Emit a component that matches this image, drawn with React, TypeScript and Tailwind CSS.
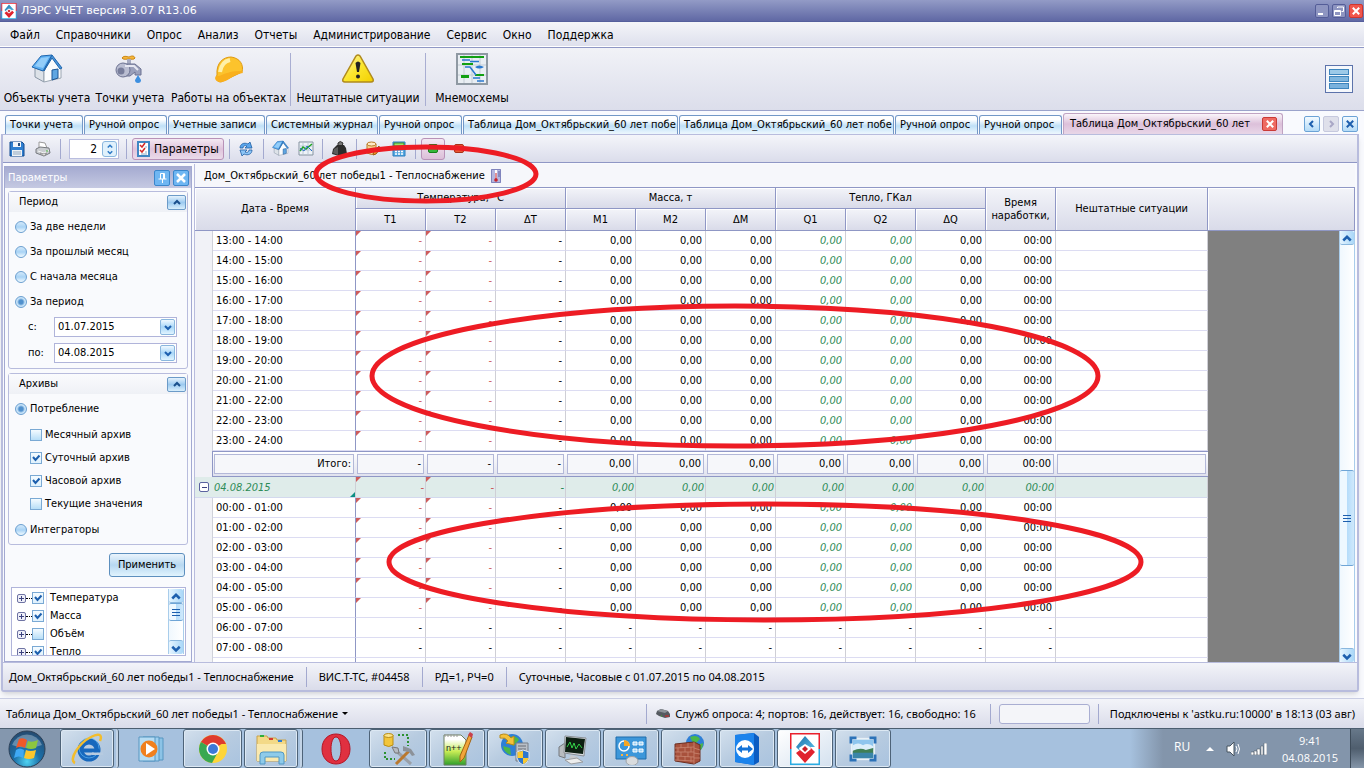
import { useState } from 'react';
import type { ReactNode } from 'react';

const MENU = ['Файл', 'Справочники', 'Опрос', 'Анализ', 'Отчеты', 'Администрирование', 'Сервис', 'Окно', 'Поддержка'];

const TABS = [
  { title: 'Точки учета', width: 'w-[78px]' },
  { title: 'Ручной опрос', width: 'w-[83px]' },
  { title: 'Учетные записи', width: 'w-[97px]' },
  { title: 'Системный журнал', width: 'w-[112px]' },
  { title: 'Ручной опрос', width: 'w-[83px]' },
  { title: 'Таблица Дом_Октябрьский_60 лет побе', width: 'w-[215px]' },
  { title: 'Таблица Дом_Октябрьский_60 лет побе', width: 'w-[215px]' },
  { title: 'Ручной опрос', width: 'w-[83px]' },
  { title: 'Ручной опрос', width: 'w-[83px]' },
];

interface ArchiveRow {
  time: string;
  empty?: boolean;
}

const ROWS_BEFORE: ArchiveRow[] = [
  { time: '13:00 - 14:00' },
  { time: '14:00 - 15:00' },
  { time: '15:00 - 16:00' },
  { time: '16:00 - 17:00' },
  { time: '17:00 - 18:00' },
  { time: '18:00 - 19:00' },
  { time: '19:00 - 20:00' },
  { time: '20:00 - 21:00' },
  { time: '21:00 - 22:00' },
  { time: '22:00 - 23:00' },
  { time: '23:00 - 24:00' },
];

const ROWS_AFTER: ArchiveRow[] = [
  { time: '00:00 - 01:00' },
  { time: '01:00 - 02:00' },
  { time: '02:00 - 03:00' },
  { time: '03:00 - 04:00' },
  { time: '04:00 - 05:00' },
  { time: '05:00 - 06:00' },
  { time: '06:00 - 07:00', empty: true },
  { time: '07:00 - 08:00', empty: true },
];

const VALUES = ['-', '-', '-', '0,00', '0,00', '0,00', '0,00', '0,00', '0,00', '00:00'];

/* ---------- Иконки ---------- */

function LogoIcon({ size }: { size: number }) {
  return (
    <svg width={size} height={size} viewBox="0 0 30 32" className="shrink-0">
      <defs>
        <linearGradient id="logoBlue" x1="0" y1="0" x2="1" y2="1">
          <stop offset="0" stopColor="#1c6fa8" />
          <stop offset="1" stopColor="#5bc0ea" />
        </linearGradient>
      </defs>
      <path d="M0 0H30V16H0Z" fill="#e9202d" />
      <path d="M0 16H30V32H0Z" fill="#29abe2" />
      <path d="M1.500 1.500H28.500V30.500H1.500Z" fill="#fff" />
      <path d="M15 3L25 14H20L15 11L9 15L10 18L6 14Z" fill="url(#logoBlue)" />
      <path d="M15 30L6 20L10 17L15 21L21 16L20 14L25 19Z" fill="#e0232e" />
      <path d="M15 13L18 16L15 19L12 16Z" fill="#c81e28" />
    </svg>
  );
}

function HouseIcon({ size }: { size: number }) {
  return (
    <svg width={size} height={size} viewBox="0 0 32 32">
      <path d="M4 15L13 18V29L4 24Z" fill="#dde2e8" stroke="#8a97a6" />
      <path d="M13 17L21 4L30 15V25L13 29Z" fill="#fbfcfd" stroke="#9aa5b1" />
      <path d="M10 3L21 2L12 18L1 14Z" fill="#5fb0f2" stroke="#1f66ae" strokeLinejoin="round" />
      <path d="M10 5L18 4L12 15L4 13Z" fill="#93cdf9" />
      <path d="M21 2L31 15L29 16L21 5L13 18Z" fill="#4b97dc" stroke="#1f66ae" strokeLinejoin="round" />
      <path d="M21 17L27 16V25L21 27Z" fill="#5fa6e2" stroke="#1c5796" />
    </svg>
  );
}

function FaucetIcon() {
  return (
    <svg width="32" height="32" viewBox="0 0 32 32">
      <path d="M8 5C10 2 14 4 15 4C17 3 20 2 21 5C20 7 17 6 15 6C13 6 9 7 8 5Z" fill="#f6b73c" stroke="#c98412" />
      <path d="M13 6H17V12H13Z" fill="#a6abc2" />
      <path d="M9 11H21L27 16V22H21V19L16 23H10Z" fill="#9aa0bb" stroke="#6d7392" />
      <circle cx="9" cy="17" r="7" fill="#b9bdd1" stroke="#6d7392" />
      <circle cx="7" cy="18" r="3.500" fill="#777d9b" />
      <path d="M11 13L20 13L24 17" stroke="#e6e8f2" strokeWidth="2" fill="none" />
      <path d="M24 22L27 27A3 3 0 1 1 21 27Z" fill="#3d8fe0" />
    </svg>
  );
}

function HelmetIcon() {
  return (
    <svg width="32" height="32" viewBox="0 0 32 32">
      <path d="M4 22C3 10 10 4 18 4C27 5 31 12 29 19L8 29C4 29 2 26 4 22Z" fill="#fcc32c" stroke="#e09a10" />
      <path d="M7 19C8 12 12 8 17 7" stroke="#fff0a8" strokeWidth="4" fill="none" />
      <path d="M3 23C8 24 14 17 29 18L30 20C21 20 15 30 6 29C3 28 1 26 3 23Z" fill="#f9b01d" />
    </svg>
  );
}

function WarningIcon() {
  return (
    <svg width="32" height="32" viewBox="0 0 32 32">
      <defs>
        <linearGradient id="warn" x1="0" y1="0" x2="1" y2="1">
          <stop offset="0" stopColor="#fdf6b0" />
          <stop offset="0.500" stopColor="#fbe62e" />
          <stop offset="1" stopColor="#f2cf00" />
        </linearGradient>
      </defs>
      <path d="M14 3Q16 1 18 3L31 26Q32 29 29 29H3Q0 29 1 26Z" fill="url(#warn)" stroke="#b08a1c" strokeWidth="1.500" />
      <path d="M13.500 10Q16 7 18.500 10L17 19H15Z" fill="#222" />
      <circle cx="16" cy="23.500" r="2" fill="#222" />
    </svg>
  );
}

function SchemeIcon() {
  return (
    <svg width="32" height="32" viewBox="0 0 32 32">
      <path d="M1 1H31V31H1Z" fill="#e9eef3" stroke="#8f99a3" strokeWidth="2" />
      <path d="M8 2V30M16 2V30M24 2V30M2 12H30M2 22H30" stroke="#c3ccd5" />
      <path d="M4 4H28" stroke="#12a012" strokeWidth="2" />
      <path d="M6 11H17" stroke="#12a012" strokeWidth="2" />
      <path d="M5 22H13V25H5Z" fill="#12a012" />
      <path d="M19 22H28" stroke="#12a012" strokeWidth="2" />
      <path d="M6 7H14M14 8.500H23M9 14H14L20 22M17 25H24M21 28H28" stroke="#2a78cf" strokeWidth="1.500" fill="none" />
      <path d="M19 14Q23 11 28 14Q23 17 19 14Z" fill="#2a78cf" />
    </svg>
  );
}

function SaveIcon() {
  return (
    <svg width="16" height="16" viewBox="0 0 16 16">
      <path d="M1 1H13L15 3V15H1Z" fill="#2f7fd0" stroke="#134a8e" />
      <path d="M4 1H12V6H4Z" fill="#f2f6fa" />
      <path d="M9 2H11V5H9Z" fill="#274f80" />
      <path d="M3 9H13V15H3Z" fill="#eef2f6" />
      <path d="M4 11H12M4 13H12" stroke="#91a7bf" />
    </svg>
  );
}

function PrinterIcon() {
  return (
    <svg width="16" height="16" viewBox="0 0 16 16">
      <path d="M4 1L10 2L12 7L4 8Z" fill="#fff" stroke="#9a9a9a" />
      <path d="M1 8L5 6L14 7L15 12L9 15L1 12Z" fill="#c9ccd0" stroke="#76797e" />
      <path d="M3 10L9 12L14 9" stroke="#f3f3f3" fill="none" />
      <path d="M5 12L9 13L12 12L9 15Z" fill="#fff" stroke="#999" />
      <path d="M11 10H13" stroke="#3faa36" />
    </svg>
  );
}

function ChecklistIcon() {
  return (
    <svg width="13" height="16" viewBox="0 0 13 16" className="shrink-0">
      <path d="M1 1H12V15H1Z" fill="#fff" stroke="#3f87c4" strokeWidth="2" />
      <path d="M3 4L5 6L8 2M3 9L5 11L8 7" stroke="#d42a2a" strokeWidth="1.500" fill="none" />
      <path d="M8 6H10M8 11H10M4 13H10" stroke="#8fa9c4" />
    </svg>
  );
}

function RefreshIcon() {
  return (
    <svg width="16" height="16" viewBox="0 0 16 16">
      <path d="M2 7C2 3 6 1 10 3L12 1L14 7H7L9 5C7 4 5 5 5 7Z" fill="#5aa6ec" stroke="#215fa5" strokeWidth="0.800" />
      <path d="M14 9C14 13 10 15 6 13L4 15L2 9H9L7 11C9 12 11 11 11 9Z" fill="#8cc5f6" stroke="#215fa5" strokeWidth="0.800" />
    </svg>
  );
}

function ChartIcon() {
  return (
    <svg width="16" height="16" viewBox="0 0 16 16">
      <path d="M1 1H15V14H1Z" fill="#eef3f8" stroke="#8593a0" />
      <path d="M5 2V13M10 2V13M2 5H14M2 9H14" stroke="#bccad8" />
      <path d="M2 10L5 6L8 8L14 3" stroke="#22a522" strokeWidth="1.500" fill="none" />
      <path d="M2 7L6 10L9 5L14 10" stroke="#2b6fc9" fill="none" />
    </svg>
  );
}

function WeightIcon() {
  return (
    <svg width="18" height="18" viewBox="0 0 18 18">
      <path d="M8 3Q10 0 13 3L12 6L8 6Z" fill="#777" stroke="#333" />
      <path d="M3 9L7 5L14 5L16 8L17 14L9 16L2 14Z" fill="#2c2c2c" />
      <path d="M4 9L8 7L8 15L3 13Z" fill="#5b5b5b" />
    </svg>
  );
}

function DatabaseIcon() {
  return (
    <svg width="16" height="16" viewBox="0 0 16 16">
      <path d="M2 3V12Q7 15 11 12V3Z" fill="#f7cf8c" stroke="#b97c28" />
      <ellipse cx="6.500" cy="3" rx="4.500" ry="2" fill="#fde9c6" stroke="#b97c28" />
      <path d="M8 14L9 10L14 5L15 8L11 13Z" fill="#f09a2a" stroke="#9d5e14" />
    </svg>
  );
}

function CalculatorIcon() {
  return (
    <svg width="14" height="16" viewBox="0 0 14 16">
      <path d="M1 1H13V15H1Z" fill="#57a9e0" stroke="#2b7fc0" />
      <path d="M2 2H12V5H2Z" fill="#9be36b" stroke="#3c8d2f" />
      <path d="M3 8H5M6 8H8M9 8H11M3 10.500H5M6 10.500H8M9 10.500H11M3 13H5M6 13H8M9 13H11" stroke="#fff" strokeWidth="1.500" />
    </svg>
  );
}

function ThermometerIcon() {
  return (
    <svg width="10" height="14" viewBox="0 0 10 14">
      <path d="M0 0H10V14H0Z" fill="#b3b6df" />
      <path d="M0.500 0.500H9.500V13.500H0.500Z" fill="none" stroke="#8084bd" />
      <path d="M4 1H6V9H4Z" fill="#fff" />
      <path d="M4.500 4H5.500V10H4.500Z" fill="#c6232b" />
      <circle cx="5" cy="11" r="1.800" fill="#c6232b" />
      <path d="M7 3H9M7 5H9M7 7H9" stroke="#5b5fa0" />
    </svg>
  );
}

function Chevron({ dir, size = 8 }: { dir: 'up' | 'down' | 'left' | 'right'; size?: number }) {
  const paths = {
    up: 'M1 6L4 3L7 6',
    down: 'M1 3L4 6L7 3',
    left: 'M5 1L2 4L5 7',
    right: 'M3 1L6 4L3 7',
  };
  return (
    <svg width={size} height={size} viewBox="0 0 8 8">
      <path d={paths[dir]} fill="none" stroke="currentColor" strokeWidth="2" />
    </svg>
  );
}

function CrossIcon({ size = 10 }: { size?: number }) {
  return (
    <svg width={size} height={size} viewBox="0 0 10 10">
      <path d="M1 1L9 9M9 1L1 9" stroke="currentColor" strokeWidth="2.500" />
    </svg>
  );
}

/* ---------- Общие элементы ---------- */

function Separator() {
  return <span className="h-5 w-px shrink-0 bg-[#a3a9cf]" />;
}

function ToolButton({ label, children }: { label: string; children: ReactNode }) {
  return (
    <button type="button" aria-label={label} className="flex h-6 w-6 items-center justify-center">
      {children}
    </button>
  );
}

function RadioRow({ name, label, defaultChecked }: { name: string; label: string; defaultChecked?: boolean }) {
  return (
    <label className="flex h-[25px] items-center gap-[3px] pl-[6px]">
      <input
        type="radio"
        name={name}
        defaultChecked={defaultChecked}
        className="h-3 w-3 appearance-none rounded-full border border-[#6b9fd0] bg-linear-to-b from-[#d3e9fa] via-[#a9d3f5] to-[#f2fbff] checked:bg-[radial-gradient(circle,#5090cd_0_2px,#c9e4f9_4px)]"
      />
      {label}
    </label>
  );
}

function CheckBox({ id, defaultChecked, label }: { id?: string; defaultChecked?: boolean; label?: string }) {
  return (
    <span className="relative flex h-3 w-3 shrink-0">
      <input
        id={id}
        aria-label={label}
        type="checkbox"
        defaultChecked={defaultChecked}
        className="peer h-3 w-3 appearance-none border border-[#7aa9d4] bg-linear-to-b from-[#f4fbff] to-[#b7def7] checked:to-[#dff1fd]"
      />
      <svg className="pointer-events-none absolute inset-0 hidden peer-checked:block" width="12" height="12" viewBox="0 0 12 12">
        <path d="M3 5L5.500 8L9.500 3.500" fill="none" stroke="#1d5fae" strokeWidth="2" />
      </svg>
    </span>
  );
}

function GroupBox({ title, children }: { title: string; children: ReactNode }) {
  const [open, setOpen] = useState(true);
  return (
    <section className="rounded-[3px] border border-[#b8bcdd] bg-[#f9fafd]">
      <header className="flex h-5 items-center justify-between bg-linear-to-b from-[#fafbfd] to-[#eff1f6] pr-px pl-[10px]">
        <h2>{title}</h2>
        <button
          type="button"
          aria-label={title}
          onClick={() => setOpen(!open)}
          className="flex h-[15px] w-[19px] items-center justify-center rounded-[2px] border border-[#6c9bc8] bg-linear-to-b from-[#e4f2fc] via-[#9ccaf0] to-[#d9effc] text-[#1a4f8c]"
        >
          <Chevron dir={open ? 'up' : 'down'} />
        </button>
      </header>
      {open && children}
    </section>
  );
}

function DateField({ id, label, value }: { id: string; label: string; value: string }) {
  return (
    <div className="flex h-[26px] items-center pr-[10px] pl-[19px]">
      <label htmlFor={id} className="w-[26px]">
        {label}
      </label>
      <div className="flex h-5 flex-1 items-center border border-[#b0b4da] bg-white pr-px">
        <input id={id} defaultValue={value} className="w-0 flex-1 pl-[3px] outline-none" />
        <button
          type="button"
          aria-label="Календарь"
          className="flex h-4 w-[15px] items-center justify-center rounded-[2px] border border-[#8ab7de] bg-linear-to-b from-[#f0f9ff] via-[#a9d7f8] to-[#e0f4ff] text-[#1d5fae]"
        >
          <Chevron dir="down" />
        </button>
      </div>
    </div>
  );
}

function ScrollBar({ thumb }: { thumb: string }) {
  return (
    <div className="flex w-4 shrink-0 flex-col border-x border-[#a9cdeb] bg-linear-to-r from-[#f0f8fe] to-white text-[#1d5fae]">
      <button type="button" aria-label="Вверх" className="flex h-[14px] shrink-0 items-center justify-center rounded-[2px] border-b border-[#8ab7de] bg-linear-to-r from-[#e6f5ff] to-[#a9d7f8]">
        <Chevron dir="up" size={10} />
      </button>
      <div className={thumb}>
        <span className="flex h-full flex-col items-center justify-center gap-px rounded-[2px] border-y border-[#6fa5d6] bg-linear-to-r from-[#eef8ff] from-50% via-[#b5dcfa] to-[#cfe9fc]">
          <i className="h-px w-2 bg-[#1d5fae]" />
          <i className="mt-px h-px w-2 bg-[#1d5fae]" />
          <i className="mt-px h-px w-2 bg-[#1d5fae]" />
        </span>
      </div>
      <button type="button" aria-label="Вниз" className="flex h-[14px] shrink-0 items-center justify-center rounded-[2px] border-t border-[#8ab7de] bg-linear-to-r from-[#e6f5ff] to-[#a9d7f8]">
        <Chevron dir="down" size={10} />
      </button>
    </div>
  );
}

/* ---------- Верхняя часть окна ---------- */

function TitleBar() {
  return (
    <header className="flex h-[22px] shrink-0 items-center border-b border-[#555f9c] bg-linear-to-b from-[#939bc6] to-[#6068a4] px-px">
      <LogoIcon size={16} />
      <h1 className="flex-1 pl-1 font-[DejaVu_Sans,sans-serif] text-[11px] text-white">ЛЭРС УЧЕТ версия 3.07 R13.06</h1>
      <div className="flex gap-[3px]">
        <button type="button" aria-label="Свернуть" className="flex h-[14px] w-[14px] items-end rounded-[2px] border border-[#545d98] bg-[#8e95c1] p-[2px]">
          <i className="h-[2px] w-[5px] bg-white" />
        </button>
        <button type="button" aria-label="Восстановить" className="flex h-[14px] w-[14px] items-center justify-center rounded-[2px] border border-[#545d98] bg-[#8e95c1]">
          <svg width="10" height="10" viewBox="0 0 10 10" fill="none" stroke="#fff">
            <path d="M3.500 2V1H9.500V5.500H7.500M0.500 4.500H6.500V9.500H0.500ZM0.500 5.500H6.500" />
          </svg>
        </button>
        <button type="button" aria-label="Закрыть" className="flex h-[14px] w-[14px] items-center justify-center rounded-[2px] border border-[#d0362f] bg-[#f0564c] text-white">
          <CrossIcon size={8} />
        </button>
      </div>
    </header>
  );
}

function MainMenu() {
  return (
    <nav className="flex h-[26px] shrink-0 items-center gap-4 border-b border-[#8f97c5] bg-linear-to-b from-[#f4f5f9] to-[#dddfec] px-[10px] text-[12px] shadow-[inset_0_-1px_0_#fff]">
      {MENU.map((item) => (
        <button type="button" key={item}>
          {item}
        </button>
      ))}
    </nav>
  );
}

function RibbonButton({ label, width, children }: { label: string; width: string; children: ReactNode }) {
  return (
    <button type="button" className={`flex h-[52px] flex-col items-center justify-between whitespace-nowrap ${width}`}>
      {children}
      <span className="leading-[14px]">{label}</span>
    </button>
  );
}

function Ribbon() {
  return (
    <div className="flex h-[63px] shrink-0 items-start border-b border-[#9ba3cb] bg-linear-to-b from-[#f1f2f7] to-[#dcdeeb] pt-[5px] pl-1 text-[12px]">
      <RibbonButton label="Объекты учета" width="w-[86px]">
        <HouseIcon size={32} />
      </RibbonButton>
      <RibbonButton label="Точки учета" width="w-[80px]">
        <FaucetIcon />
      </RibbonButton>
      <RibbonButton label="Работы на объектах" width="w-[117px]">
        <HelmetIcon />
      </RibbonButton>
      <span className="ml-[3px] h-[53px] w-px bg-[#a9aed2]" />
      <RibbonButton label="Нештатные ситуации" width="w-[134px]">
        <WarningIcon />
      </RibbonButton>
      <span className="h-[53px] w-px bg-[#a9aed2]" />
      <RibbonButton label="Мнемосхемы" width="w-[92px]">
        <SchemeIcon />
      </RibbonButton>
      <button type="button" aria-label="Вид" className="mt-3 mr-[11px] ml-auto flex h-7 w-7 flex-col items-center justify-center gap-px border border-[#5c73ab] bg-[#f5f8fc]">
        <i className="h-[6px] w-5 border border-[#3d85bd] bg-[#9ccae8]" />
        <i className="h-[6px] w-5 border border-[#3d85bd] bg-[#7fb6de]" />
        <i className="h-[6px] w-5 border border-[#3d85bd] bg-[#7ab2dd]" />
      </button>
    </div>
  );
}

function DocumentTabs() {
  return (
    <div className="flex h-[23px] shrink-0 items-end bg-[#f9fafe] pl-[5px]">
      {TABS.map((tab, i) => (
        <button
          type="button"
          key={i}
          className={`mr-px flex h-[19px] min-w-0 items-center rounded-t-[3px] border border-b-0 border-[#7398c7] bg-linear-to-b from-white from-20% via-[#bfe0f7] via-55% to-[#eef8fe] pl-1 whitespace-nowrap ${tab.width}`}
        >
          {tab.title}
        </button>
      ))}
      <div className="flex h-[21px] w-[220px] shrink-0 items-center justify-between rounded-t-[3px] border border-b-0 border-[#c0a3c2] bg-linear-to-b from-[#faf5fa] via-[#dcc0da] to-[#e9d7e8] pr-[5px] pl-[6px]">
        <button type="button">Таблица Дом_Октябрьский_60 лет</button>
        <button type="button" aria-label="Закрыть вкладку" className="flex h-[14px] w-[15px] items-center justify-center rounded-[2px] border border-[#c93a36] bg-[#ee6a63] text-white">
          <CrossIcon size={8} />
        </button>
      </div>
      <div className="mr-[6px] mb-[2px] ml-auto flex shrink-0 gap-[3px] text-[#1d5fae]">
        <button type="button" aria-label="Предыдущая" className="flex h-4 w-4 items-center justify-center rounded-[2px] border border-[#6ca3d6] bg-linear-to-b from-[#f3faff] to-[#b4dbf7]">
          <Chevron dir="left" />
        </button>
        <button type="button" aria-label="Следующая" className="flex h-4 w-4 items-center justify-center rounded-[2px] border border-[#c6c9de] bg-[#dfe0eb] text-[#a9a7c6]">
          <Chevron dir="right" />
        </button>
        <button type="button" aria-label="Закрыть" className="flex h-4 w-4 items-center justify-center rounded-[2px] border border-[#6ca3d6] bg-linear-to-b from-[#f3faff] to-[#b4dbf7]">
          <CrossIcon size={8} />
        </button>
      </div>
    </div>
  );
}

function TableToolbar() {
  return (
    <div className="flex h-[28px] shrink-0 items-center border-b border-[#8f97c5] bg-linear-to-b from-[#f4f5fa] to-[#dbddeb] pl-[2px]">
      <ToolButton label="Сохранить">
        <SaveIcon />
      </ToolButton>
      <span className="w-[2px]" />
      <ToolButton label="Печать">
        <PrinterIcon />
      </ToolButton>
      <span className="w-[5px]" />
      <Separator />
      <div className="mr-[7px] ml-2 flex h-5 w-[50px] items-center border border-[#b9bddf] bg-white pr-px">
        <input aria-label="Знаков после запятой" defaultValue="2" className="w-0 flex-1 pr-[5px] text-right text-[12px] outline-none" />
        <button type="button" aria-label="Изменить" className="flex h-4 w-[15px] flex-col items-center justify-center rounded-[3px] border border-[#8ab7de] bg-[#e0f1fc] text-[#2b78c5]">
          <Chevron dir="up" size={6} />
          <Chevron dir="down" size={6} />
        </button>
      </div>
      <Separator />
      <button type="button" className="mx-[5px] flex h-[22px] w-[92px] items-center gap-1 rounded-[3px] border border-[#b892b8] bg-linear-to-b from-[#f4e9f3] via-[#dfc4dc] to-[#eadbea] pl-1 text-[12px]">
        <ChecklistIcon />
        Параметры
      </button>
      <Separator />
      <span className="w-1" />
      <ToolButton label="Обновить">
        <RefreshIcon />
      </ToolButton>
      <span className="w-[5px]" />
      <Separator />
      <span className="w-1" />
      <ToolButton label="Объект учета">
        <HouseIcon size={17} />
      </ToolButton>
      <span className="w-[2px]" />
      <ToolButton label="График">
        <ChartIcon />
      </ToolButton>
      <span className="w-1" />
      <Separator />
      <span className="w-1" />
      <ToolButton label="Баланс">
        <WeightIcon />
      </ToolButton>
      <span className="w-[5px]" />
      <Separator />
      <span className="w-1" />
      <ToolButton label="Записать">
        <DatabaseIcon />
      </ToolButton>
      <span className="w-[2px]" />
      <ToolButton label="Пересчитать">
        <CalculatorIcon />
      </ToolButton>
      <span className="w-1" />
      <Separator />
      <button type="button" aria-label="Нормальные данные" className="ml-[5px] flex h-[22px] w-6 items-center justify-center rounded-[3px] border border-[#b892b8] bg-linear-to-b from-[#f4e9f3] to-[#dcbfd9]">
        <i className="h-[9px] w-[10px] rounded-[2px] border border-[#15801a] bg-[#35b63a]" />
      </button>
      <span className="w-[2px]" />
      <ToolButton label="Ошибки">
        <i className="h-[9px] w-[10px] rounded-[2px] border border-[#a8321a] bg-[#e65a33]" />
      </ToolButton>
    </div>
  );
}

/* ---------- Панель параметров ---------- */

function TreeRow({ label, checked }: { label: string; checked?: boolean }) {
  return (
    <li className="flex h-[18px] items-center">
      <span className="flex h-[9px] w-[9px] items-center justify-center rounded-[2px] border border-[#6f74a4] bg-[#eeeff8]">
        <svg width="5" height="5" viewBox="0 0 5 5" stroke="#3c4380">
          <path d="M2.500 0V5M0 2.500H5" />
        </svg>
      </span>
      <i className="w-[6px] border-t border-dotted border-black" />
      <label className="flex items-center">
        <CheckBox defaultChecked={checked} label={label} />
        <span className="ml-[2px] border-l border-[#dadcf0] pl-[3px] leading-[18px]">{label}</span>
      </label>
    </li>
  );
}

function ArchiveCheck({ id, label, defaultChecked }: { id: string; label: string; defaultChecked?: boolean }) {
  return (
    <div className="flex h-[23px] items-center gap-[3px] pl-[21px]">
      <CheckBox id={id} defaultChecked={defaultChecked} />
      <label htmlFor={id}>{label}</label>
    </div>
  );
}

function ParametersPanel() {
  return (
    <aside className="mt-[2px] flex w-[188px] shrink-0 flex-col border border-[#a3a9d1] bg-[#f9fafd]">
      <header className="flex h-[21px] shrink-0 items-center gap-[3px] bg-linear-to-b from-[#a5abd1] to-[#c5c9e2] pr-[2px] pl-[3px] text-white">
        <h2 className="flex-1">Параметры</h2>
        <button type="button" aria-label="Закрепить" className="flex h-4 w-4 items-center justify-center rounded-[2px] border border-[#3a86cc] bg-[#6fb6f2]">
          <svg width="9" height="10" viewBox="0 0 9 10" fill="none" stroke="#fff">
            <path d="M2.500 6V0.500H6.500V6M5.500 1V6M0.500 6H8.500M4.500 6V10" />
          </svg>
        </button>
        <button type="button" aria-label="Закрыть панель" className="flex h-4 w-4 items-center justify-center rounded-[2px] border border-[#3a86cc] bg-[#6fb6f2] text-white">
          <CrossIcon />
        </button>
      </header>
      <div className="flex min-h-0 flex-1 flex-col gap-1 px-[3px] pt-[3px] pb-[5px]">
        <GroupBox title="Период">
          <div className="py-[2px]">
            <RadioRow name="period" label="За две недели" />
            <RadioRow name="period" label="За прошлый месяц" />
            <RadioRow name="period" label="С начала месяца" />
            <RadioRow name="period" label="За период" defaultChecked />
            <DateField id="date-from" label="с:" value="01.07.2015" />
            <DateField id="date-to" label="по:" value="04.08.2015" />
          </div>
        </GroupBox>
        <GroupBox title="Архивы">
          <div className="py-[2px]">
            <RadioRow name="archive" label="Потребление" defaultChecked />
            <div className="py-[2px]">
              <ArchiveCheck id="month" label="Месячный архив" />
              <ArchiveCheck id="day" label="Суточный архив" defaultChecked />
              <ArchiveCheck id="hour" label="Часовой архив" defaultChecked />
              <ArchiveCheck id="current" label="Текущие значения" />
            </div>
            <RadioRow name="archive" label="Интеграторы" />
          </div>
        </GroupBox>
        <button type="button" className="mt-1 mr-[3px] mb-[6px] h-6 w-[76px] shrink-0 self-end rounded-[3px] border border-[#5d8fbe] bg-linear-to-b from-[#eaf4fc] via-[#b7d8f1] to-[#e1f3fd]">
          Применить
        </button>
        <div className="mr-[2px] ml-[3px] flex min-h-0 flex-1 overflow-hidden border border-[#b0b4da] bg-white p-px">
          <ul className="flex-1 pl-1">
            <TreeRow label="Температура" checked />
            <TreeRow label="Масса" checked />
            <TreeRow label="Объём" />
            <TreeRow label="Тепло" checked />
          </ul>
          <ScrollBar thumb="h-[18px] mb-auto" />
        </div>
      </div>
    </aside>
  );
}

/* ---------- Таблица ---------- */

const HEAD_CELL = 'border-r border-b border-[#8f97c5] bg-linear-to-b from-[#f3f4f9] to-[#d9dbe9] font-normal shadow-[inset_1px_1px_0_#fff]';

function Columns({ rest }: { rest?: boolean }) {
  return (
    <colgroup>
      <col className="w-[18px]" />
      <col className="w-[143px]" />
      {VALUES.map((_, i) => (
        <col key={i} className="w-[70px]" />
      ))}
      <col className="w-[152px]" />
      {rest && <col />}
    </colgroup>
  );
}

function DataRow({ row }: { row: ArchiveRow }) {
  return (
    <tr className="h-5">
      <td className="border-r border-[#d0d2da] bg-[#f1f2f7]" />
      <td className="border-r border-b border-r-[#8f97c5] border-b-[#dcdcf2] bg-white pl-[3px]">{row.time}</td>
      {VALUES.map((value, i) => {
        const invalid = i < 2 && !row.empty;
        const italic = (i === 6 || i === 7) && !row.empty;
        const color = invalid ? 'text-[#cd5c5c]' : italic ? 'text-[#2e8b57] italic' : '';
        return (
          <td key={i} className="relative border-r border-b border-r-[#cfcfd6] border-b-[#dcdcf2] bg-white pr-[3px] text-right">
            {invalid && <i className="absolute top-0 left-0 border-t-5 border-r-5 border-t-[#cd5c5c] border-r-transparent" />}
            <span className={color}>{row.empty ? '-' : value}</span>
          </td>
        );
      })}
      <td className="border-r border-b border-r-[#cfcfd6] border-b-[#dcdcf2] bg-white" />
    </tr>
  );
}

function ArchiveTable() {
  return (
    <section className="flex min-w-0 flex-1 flex-col border-l border-[#b8bcdd]">
      <div className="flex h-[23px] shrink-0 items-center gap-[6px] bg-[#f6f7fb] pl-[9px]">
        Дом_Октябрьский_60 лет победы1 - Теплоснабжение
        <ThermometerIcon />
      </div>
      <table className="w-full shrink-0 table-fixed border-separate border-spacing-0 border-t border-[#8f97c5]">
        <Columns rest />
        <thead>
          <tr className="h-[21px]">
            <th colSpan={2} rowSpan={2} className={HEAD_CELL}>Дата - Время</th>
            <th colSpan={3} className={HEAD_CELL}>Температура, °C</th>
            <th colSpan={3} className={HEAD_CELL}>Масса, т</th>
            <th colSpan={3} className={HEAD_CELL}>Тепло, ГКал</th>
            <th rowSpan={2} className={`${HEAD_CELL} leading-[13px]`}>
              Время
              <br />
              наработки,
            </th>
            <th rowSpan={2} className={HEAD_CELL}>Нештатные ситуации</th>
            <th rowSpan={2} className={HEAD_CELL} />
          </tr>
          <tr className="h-[22px]">
            {['T1', 'T2', 'ΔT', 'M1', 'M2', 'ΔM', 'Q1', 'Q2', 'ΔQ'].map((name) => (
              <th key={name} className={HEAD_CELL}>{name}</th>
            ))}
          </tr>
        </thead>
      </table>
      <div className="flex min-h-0 flex-1">
        <div className="h-full w-[1013px] shrink-0 overflow-hidden">
          <table className="w-full table-fixed border-separate border-spacing-0">
            <Columns />
            <tbody>
              {ROWS_BEFORE.map((row) => (
                <DataRow key={row.time} row={row} />
              ))}
              <tr className="h-[26px]">
                <td className="border-r border-[#8f97c5] bg-[#f1f2f7]" />
                {['Итого:', ...VALUES, ''].map((value, i) => (
                  <td key={i} className="border-y border-[#8f97c5] bg-linear-to-b from-white to-[#e0e2ee] pr-[2px] pl-px text-right">
                    <div className="h-5 border border-[#b3b8d8] bg-[#f6f7fa] px-[2px] leading-[18px]">{value}</div>
                  </td>
                ))}
              </tr>
              <tr className="h-[21px] text-[#2e8b57] italic">
                <td className="border-b border-[#d3d9ee] bg-[#dfecea]">
                  <button type="button" aria-label="Свернуть день" className="ml-1 flex h-[10px] w-[10px] items-center justify-center rounded-[2px] border border-[#5b63a0] bg-white">
                    <i className="h-px w-[5px] bg-[#3c4380]" />
                  </button>
                </td>
                <td className="relative border-r border-b border-r-[#cfcfd6] border-b-[#d3d9ee] bg-[#dfecea] pt-[2px] pl-px">
                  04.08.2015
                  <i className="absolute right-0 bottom-0 border-b-5 border-l-5 border-b-[#0c8f83] border-l-transparent" />
                </td>
                {VALUES.map((value, i) => (
                  <td key={i} className="relative border-r border-b border-r-[#cfcfd6] border-b-[#d3d9ee] bg-[#dfecea] pt-[2px] pr-px text-right">
                    {i < 2 && <i className="absolute top-0 left-0 border-t-5 border-r-5 border-t-[#cd5c5c] border-r-transparent" />}
                    <span className={i < 2 ? 'text-[#cd5c5c]' : ''}>{value}</span>
                  </td>
                ))}
                <td className="border-r border-b border-r-[#cfcfd6] border-b-[#d3d9ee] bg-[#dfecea]" />
              </tr>
              {ROWS_AFTER.map((row) => (
                <DataRow key={row.time} row={row} />
              ))}
              <tr className="h-5">
                <td className="border-r border-[#d0d2da] bg-[#f1f2f7]" />
                <td className="border-r border-[#8f97c5] bg-white" />
                {VALUES.map((_, i) => (
                  <td key={i} className="border-r border-[#cfcfd6] bg-white" />
                ))}
                <td className="border-r border-[#cfcfd6] bg-white" />
              </tr>
            </tbody>
          </table>
        </div>
        <div className="flex-1 bg-[#808080]" />
        <ScrollBar thumb="mt-[225px] h-[96px] mb-auto" />
      </div>
    </section>
  );
}

/* ---------- Строки состояния ---------- */

function TableStatus() {
  return (
    <footer className="flex h-[28px] shrink-0 items-center gap-3 border-t border-[#b8bcdd] bg-linear-to-b from-[#f3f4f9] to-[#dadcea] pl-[6px] font-[Noto_Sans,sans-serif]">
      <span>Дом_Октябрьский_60 лет победы1 - Теплоснабжение</span>
      <Separator />
      <span>ВИС.Т-ТС, #04458</span>
      <Separator />
      <span>РД=1, РЧ=0</span>
      <Separator />
      <span>Суточные, Часовые с 01.07.2015 по 04.08.2015</span>
    </footer>
  );
}

function AppStatus() {
  return (
    <footer className="flex h-[30px] shrink-0 items-center border-t border-[#c9cde3] bg-linear-to-b from-[#f3f4f9] to-[#dadcea] pr-[9px] pl-[6px] font-[Noto_Sans,sans-serif]">
      <button type="button" className="flex flex-1 items-center gap-1">
        Таблица Дом_Октябрьский_60 лет победы1 - Теплоснабжение
        <i className="border-x-3 border-t-3 border-x-transparent border-t-black" />
      </button>
      <Separator />
      <svg className="mr-[5px] ml-[9px]" width="14" height="10" viewBox="0 0 14 10">
        <path d="M1 2L5 0L12 2L14 5V8L9 9L3 7L0 5Z" fill="#555a60" />
        <path d="M1 2L5 0L12 2L9 4Z" fill="#8c9298" />
        <path d="M5 7H6" stroke="#3fae2a" strokeWidth="1" />
        <path d="M9 7H13" stroke="#e0231c" strokeWidth="1" />
      </svg>
      <span>Служб опроса: 4; портов: 16, действует: 16, свободно: 16</span>
      <span className="w-[14px]" />
      <Separator />
      <div className="mx-2 h-5 w-[91px] rounded-[3px] border border-[#a9aed2] bg-[#f4f5f9]" />
      <Separator />
      <span className="pl-[11px]">Подключены к 'astku.ru:10000' в 18:13 (03 авг)</span>
    </footer>
  );
}

/* ---------- Панель задач ---------- */

function StartOrb() {
  return (
    <svg width="38" height="38" viewBox="0 0 38 38">
      <defs>
        <radialGradient id="orb" cx="0.500" cy="0.850" r="0.800">
          <stop offset="0" stopColor="#4fd3f2" />
          <stop offset="0.450" stopColor="#1b6fa8" />
          <stop offset="1" stopColor="#244d74" />
        </radialGradient>
      </defs>
      <circle cx="19" cy="19" r="18" fill="url(#orb)" stroke="#2c3f55" />
      <path d="M4 15A16 16 0 0 1 34 15Q19 21 4 15Z" fill="#fff" opacity="0.300" />
      <path d="M11 9Q15 7 19 10L17 18Q13 15 8 18Z" fill="#f0592a" />
      <path d="M20 11Q24 13 30 10L28 18Q23 20 18 18Z" fill="#8cc63f" />
      <path d="M8 20Q12 17 16 20L15 28Q11 25 6 28Z" fill="#3fa9f5" />
      <path d="M18 20Q22 22 28 20L26 28Q21 30 16 28Z" fill="#fcc62d" />
    </svg>
  );
}

function IeIcon() {
  return (
    <svg width="34" height="34" viewBox="0 0 34 34">
      <circle cx="19" cy="18" r="8.500" fill="none" stroke="#1768bd" strokeWidth="6" />
      <circle cx="19" cy="16" r="10" fill="none" stroke="#5cb4f2" strokeWidth="1" opacity="0.700" />
      <path d="M12 16.500H29V20.500H12Z" fill="#1768bd" />
      <path d="M22 20.500H33V23H22Z" fill="#b7cbe0" />
      <path d="M5 31C-2 28 9 11 21 5C28 1 33 2 30 9" fill="none" stroke="#f3bd2c" strokeWidth="2.500" />
    </svg>
  );
}

function MediaIcon() {
  return (
    <svg width="32" height="32" viewBox="0 0 32 32">
      <path d="M12 5H28V27H12Z" fill="#8cc3e6" stroke="#5796c1" />
      <path d="M8 4H24V28H8Z" fill="#9fd0ef" stroke="#5796c1" />
      <path d="M4 4H20V28H4Z" fill="#b6dcf3" stroke="#5796c1" />
      <circle cx="14" cy="16" r="8.500" fill="#f0801e" />
      <path d="M11 10L20 16L11 22Z" fill="#fff" />
    </svg>
  );
}

function ChromeIcon() {
  return (
    <svg width="30" height="30" viewBox="1 1 30 30">
      <circle cx="16" cy="16" r="14" fill="#fdd53a" />
      <path d="M16 16L3.900 9A14 14 0 0 1 28.100 9Z" fill="#de3b2f" />
      <path d="M3.900 9A14 14 0 0 0 15 30L21 19L16 16Z" fill="#39a852" />
      <path d="M16 9H28L29 11H16Z" fill="#de3b2f" />
      <circle cx="16" cy="16" r="6.500" fill="#fff" />
      <circle cx="16" cy="16" r="5" fill="#3c79d8" />
    </svg>
  );
}

function FolderIcon() {
  return (
    <svg width="32" height="32" viewBox="0 0 32 32">
      <path d="M2 3H12L13 5H21L22 7H31V28H2Z" fill="#f3d987" stroke="#c9a24a" />
      <path d="M5 3H9" stroke="#2fae3a" strokeWidth="2" />
      <path d="M14 6H18" stroke="#d83a2f" strokeWidth="2" />
      <path d="M23 8H27" stroke="#2f7dd0" strokeWidth="2" />
      <path d="M2 11H31V28H2Z" fill="#fae9ae" />
      <path d="M5 31V22Q5 19 8 19H26Q29 19 29 22V31H24V24H10V31Z" fill="#8ecbea" stroke="#5097c4" />
    </svg>
  );
}

function OperaIcon() {
  return (
    <svg width="30" height="32" viewBox="0 0 30 32">
      <path
        fillRule="evenodd"
        d="M15 1C23 1 29 7 29 16C29 25 23 31 15 31C7 31 1 25 1 16C1 7 7 1 15 1ZM15 4C12 4 10 9 10 16C10 23 12 28 15 28C18 28 20 23 20 16C20 9 18 4 15 4Z"
        fill="#e03040"
        stroke="#b51424"
      />
    </svg>
  );
}

function ToolsIcon() {
  return (
    <svg width="34" height="34" viewBox="0 0 34 34">
      <path d="M3 3V13Q8 16 12 13V3Z" fill="#f2c53a" stroke="#b98d14" />
      <ellipse cx="7.500" cy="3.500" rx="4.500" ry="2" fill="#fbe48c" stroke="#b98d14" />
      <path d="M17 3H27V14M4 20V27H14" fill="none" stroke="#2c9130" strokeWidth="2" strokeDasharray="2 2" />
      <path d="M14 18L30 32" stroke="#9aa0a8" strokeWidth="3" />
      <path d="M29 18L15 32" stroke="#b9782e" strokeWidth="3" />
      <path d="M22 14L30 17L34 23L31 24L28 20L22 19Z" fill="#8c9299" />
      <path d="M11 15L17 16L18 21L14 21Z" fill="#b6bbc2" stroke="#777" />
    </svg>
  );
}

function EditorIcon() {
  return (
    <svg width="32" height="34" viewBox="0 0 32 34">
      <defs>
        <linearGradient id="note" x1="0" y1="0" x2="0" y2="1">
          <stop offset="0.150" stopColor="#fff" />
          <stop offset="0.550" stopColor="#c7ec55" />
          <stop offset="1" stopColor="#2e9e2b" />
        </linearGradient>
      </defs>
      <path d="M3 3H20L25 8V33H3Z" fill="url(#note)" stroke="#6c8060" />
      <path d="M4 2V5M7 2V5M10 2V5M13 2V5M16 2V5" stroke="#999" />
      <path d="M28 3L31 5L23 26L19 30L19 24Z" fill="#f2a53a" stroke="#a36412" />
      <path d="M27 3L29 0L32 2L31 6Z" fill="#c9414c" />
      <text x="5" y="19" fontSize="9" fill="#222" fontFamily="Liberation Sans, sans-serif">n++</text>
    </svg>
  );
}

function GlobeServerIcon() {
  return (
    <svg width="32" height="34" viewBox="0 0 32 34">
      <circle cx="13" cy="13" r="11" fill="#2e7fd6" />
      <path d="M10 5Q18 3 20 8L14 14L11 10ZM4 14L11 16L12 23Q5 21 4 14Z" fill="#4bb749" />
      <path d="M1 3Q8 0 12 6L15 4L15 13L7 11L9 9Q6 5 1 6Z" fill="#f4c23a" stroke="#b98a17" />
      <path d="M17 11H29V29H17Z" fill="#b9bfc7" stroke="#777e88" />
      <path d="M19 14H27M19 17H27M19 20H27" stroke="#666d77" />
      <path d="M24 18L30 20V26Q29 31 24 33Q19 31 18 26V20Z" fill="#2e77cd" stroke="#dfe5ec" />
      <path d="M24 19V26H18.500V20ZM24 26H29.500Q28 31 24 32Z" fill="#fbc92f" />
    </svg>
  );
}

function MonitorIcon() {
  return (
    <svg width="32" height="32" viewBox="0 0 32 32">
      <path d="M2 14L8 10V25L2 23Z" fill="#b8bcc0" stroke="#74797e" />
      <path d="M8 3L29 5L27 23L7 20Z" fill="#dadde0" stroke="#8a8f94" />
      <path d="M9 4L28 6L26 21L8 19Z" fill="#0d1f12" />
      <path d="M10 14L13 9L15 15L17 10L19 16L22 11L25 15" fill="none" stroke="#32d148" />
      <path d="M14 22L21 24L22 28L11 27Z" fill="#c7cacd" />
      <path d="M8 27L20 25L26 29L14 31Z" fill="#eceded" stroke="#9a9c9e" />
    </svg>
  );
}

function ControlIcon() {
  return (
    <svg width="32" height="32" viewBox="0 0 32 32">
      <path d="M1 4H31V26H1Z" fill="#3c97da" stroke="#1f6cab" />
      <circle cx="9" cy="13" r="5" fill="none" stroke="#fff" strokeWidth="1.500" />
      <path d="M9 13V7A6 6 0 0 1 15 13Z" fill="#f5a623" />
      <path d="M18 9H22V12H18ZM24 9H28V12H24ZM18 16H22V19H18ZM24 16H28V19H24Z" fill="#9fd3f6" stroke="#fff" />
      <path d="M6 22H8M11 22H13" stroke="#ffb13b" strokeWidth="2" />
      <ellipse cx="17" cy="28" rx="6" ry="4.500" fill="#d9dcde" stroke="#9ea2a6" />
    </svg>
  );
}

function FirewallIcon() {
  return (
    <svg width="32" height="32" viewBox="0 0 32 32">
      <circle cx="22" cy="10" r="9" fill="#2e7fd6" />
      <path d="M17 4Q24 1 27 6L22 11L19 8ZM25 12L30 10Q30 17 25 18Z" fill="#4bb749" />
      <path d="M2 11L21 9L27 12V28L21 31L2 28Z" fill="#a8513c" stroke="#6c2f22" />
      <path d="M2 15L21 14M2 19H21M2 23L21 24M2 27L21 28M8 11V15M15 10V15M5 15V19M12 15V19M18 14V19M8 19V23M15 19V24M5 23V27M12 23V28M18 24V29M21 9V31M21 15L27 17M21 20L27 21M21 25L27 25" stroke="#c98671" strokeWidth="0.800" />
    </svg>
  );
}

function TeamViewerIcon() {
  return (
    <svg width="30" height="34" viewBox="0 0 30 34">
      <path d="M3 3L22 1L27 5V30L22 33L3 30Z" fill="#0b5cc2" />
      <path d="M3 3L22 1V33L3 30Z" fill="#1b83ec" />
      <circle cx="13" cy="17" r="9" fill="#fff" />
      <path d="M5 17L10 13V15.500H16V13L21 17L16 21V18.500H10V21Z" fill="#1473d8" />
    </svg>
  );
}

function PhotoIcon() {
  return (
    <svg width="28" height="26" viewBox="0 0 30 28">
      <path d="M2 2H28V26H2Z" fill="#e9f1f7" />
      <path d="M4 4H26V15H4Z" fill="#8ec5ee" />
      <path d="M4 10Q10 6 15 10Q20 7 26 11V16H4Z" fill="#dceefa" />
      <path d="M4 16Q12 12 18 15L26 13V19H4Z" fill="#3f7f55" />
      <path d="M4 18H26V24H4Z" fill="#3a86a8" />
      <path d="M2 8V2H8M22 2H28V8M28 20V26H22M8 26H2V20" fill="none" stroke="#2c72b8" strokeWidth="3" />
    </svg>
  );
}

function TaskButton({ label, width, plain, active, children }: { label: string; width: string; plain?: boolean; active?: boolean; children: ReactNode }) {
  const look = plain
    ? 'border-transparent'
    : active
      ? 'border-[#4e6378] bg-linear-to-br from-white to-[#d4e1ef] shadow-[inset_0_0_0_1px_#f5f9fc]'
      : 'border-[#4e6378] bg-linear-to-br from-[#d3e0ed] via-[#b7cbe0] to-[#a9c3df] shadow-[inset_0_0_0_1px_#dce8f3]';
  return (
    <button type="button" aria-label={label} className={`flex h-[39px] shrink-0 items-center justify-center rounded-[3px] border ${width} ${look}`}>
      {children}
    </button>
  );
}

function Taskbar() {
  return (
    <footer className="flex h-10 shrink-0 items-stretch border-t border-[#4c5e70] bg-[#a6c1de] font-[Open_Sans,sans-serif] text-white">
      <button type="button" aria-label="Пуск" className="flex w-[60px] items-center justify-center bg-[#8497ae] pr-[6px]">
        <StartOrb />
      </button>
      <div className="flex flex-1 gap-[2px]">
        <TaskButton label="Internet Explorer" width="w-[54px]"><IeIcon /></TaskButton>
        <span className="w-[3px] rounded-r-[3px] border-r border-[#4e6378] bg-[#c3d4e6]" />
        <TaskButton label="Проигрыватель" width="w-[60px]" plain><MediaIcon /></TaskButton>
        <TaskButton label="Chrome" width="w-[59px]"><ChromeIcon /></TaskButton>
        <TaskButton label="Проводник" width="w-[54px]"><FolderIcon /></TaskButton>
        <span className="w-[3px] rounded-r-[3px] border-r border-[#4e6378] bg-[#c3d4e6]" />
        <TaskButton label="Opera" width="w-[62px]" plain><OperaIcon /></TaskButton>
        <TaskButton label="Конфигуратор" width="w-[58px]"><ToolsIcon /></TaskButton>
        <TaskButton label="Notepad++" width="w-[56px]"><EditorIcon /></TaskButton>
        <TaskButton label="Службы" width="w-[56px]"><GlobeServerIcon /></TaskButton>
        <TaskButton label="Монитор" width="w-[56px]"><MonitorIcon /></TaskButton>
        <TaskButton label="Панель управления" width="w-[56px]"><ControlIcon /></TaskButton>
        <TaskButton label="Брандмауэр" width="w-[56px]"><FirewallIcon /></TaskButton>
        <TaskButton label="TeamViewer" width="w-[56px]"><TeamViewerIcon /></TaskButton>
        <TaskButton label="ЛЭРС УЧЕТ" width="w-[56px]" active><LogoIcon size={32} /></TaskButton>
        <TaskButton label="Просмотр" width="w-[56px]"><PhotoIcon /></TaskButton>
      </div>
      <div className="flex w-[220px] items-center bg-linear-to-r from-[#a6c1de] to-[#8395ab] to-15% pl-[44px] text-[12px]">
        <span className="pb-1">RU</span>
        <i className="ml-4 border-x-4 border-b-4 border-x-transparent border-b-white" />
        <svg className="ml-3" width="17" height="16" viewBox="0 0 17 16">
          <path d="M1 5H4L8 1V15L4 11H1Z" fill="#fff" stroke="#45525f" />
          <path d="M10 5Q12 8 10 11M12 3Q15 8 12 13" fill="none" stroke="#fff" />
        </svg>
        <svg className="ml-2" width="16" height="12" viewBox="0 0 16 12" fill="#fff" stroke="#45525f" strokeWidth="0.500">
          <path d="M0 9H3V12H0ZM3 8H6V12H3ZM6 6H9V12H6ZM10 3H12V12H10ZM13 0H16V12H13Z" />
        </svg>
        <time className="ml-auto pr-3 text-center text-[11px] leading-[17px]">
          9:41
          <br />
          04.08.2015
        </time>
      </div>
      <button type="button" aria-label="Показать рабочий стол" className="w-[14px] border-l border-[#3d4b59] bg-linear-to-b from-[#67788a] via-[#4f5e6e] to-[#8596a9]" />
    </footer>
  );
}

export default function App() {
  return (
    <div className="relative flex h-screen flex-col overflow-hidden bg-[#f9fafe] font-[DejaVu_Sans_Condensed,DejaVu_Sans,sans-serif] text-[11px] leading-[14px] text-black">
      <TitleBar />
      <MainMenu />
      <Ribbon />
      <DocumentTabs />
      <main className="mr-[5px] mb-[6px] ml-px flex min-h-0 flex-1 flex-col rounded-b-[3px] border-x-2 border-t border-b-2 border-[#b8bcdd] bg-[#f9fafe] shadow-md">
        <TableToolbar />
        <div className="flex min-h-0 flex-1 gap-[2px] pt-px pr-[2px] pl-px">
          <ParametersPanel />
          <ArchiveTable />
        </div>
        <TableStatus />
      </main>
      <AppStatus />
      <Taskbar />

      {/* Пометки красным маркером поверх окна */}
      <svg className="pointer-events-none absolute top-0 left-0" width="1364" height="768" viewBox="0 0 1364 768" fill="none" stroke="#ed1c24" strokeWidth="5">
        <ellipse cx="426" cy="174" rx="110" ry="27" />
        <ellipse cx="735" cy="376" rx="363" ry="70" />
        <ellipse cx="765" cy="562" rx="376" ry="58" />
      </svg>
    </div>
  );
}
